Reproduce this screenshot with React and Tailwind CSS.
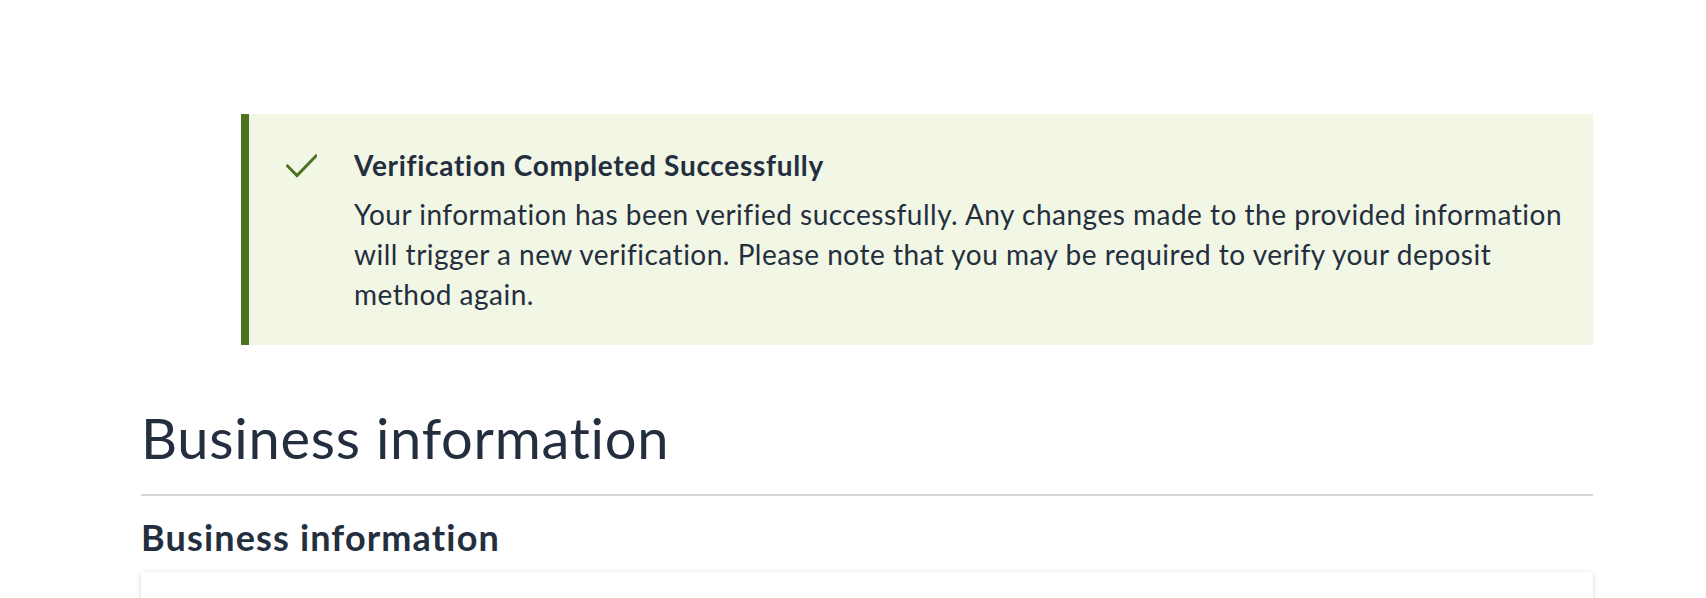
import React from 'react';

const CheckIcon = () => (
  <svg width="31" height="24" viewBox="0 0 31 24" fill="none" className="mt-[9px] shrink-0">
    <polyline
      points="1.5,12 11,21.5 30,2"
      stroke="#4b7321"
      strokeWidth="3"
      strokeLinecap="square"
      fill="none"
    />
  </svg>
);

const App = () => {
  return (
    <div className="min-h-screen bg-white font-['Lato',sans-serif] text-[#232f3e] overflow-hidden">
      <div className="ml-[141px] w-[1452px] pt-[114px]">
        {/* success flash */}
        <div className="ml-[100px] flex border-l-8 border-[#4b7321] bg-[#f2f6e4] pl-[37px] pr-[20px] pt-[31px] pb-[31px]">
          <CheckIcon />
          <div className="ml-[37px]">
            <div className="text-[28px] font-bold leading-[40px] tracking-[0.7px]">
              Verification Completed Successfully
            </div>
            <p className="mt-[9px] text-[28px] leading-[40px] tracking-[0.5px]">
              Your information has been verified successfully. Any changes made to the provided information
              <br />
              will trigger a new verification. Please note that you may be required to verify your deposit
              <br />
              method again.
            </p>
          </div>
        </div>

        <h1 className="mt-[57px] text-[56px] font-normal leading-[72px] tracking-[0.75px]">Business information</h1>
        <div className="mt-[20px] h-[2px] bg-[#d5d5dc]" />

        <h2 className="mt-[17px] text-[36px] font-bold leading-[48px] tracking-[1.15px]">Business information</h2>
        <div className="mt-[11px] h-[120px] rounded-[2px] bg-white shadow-[0_1px_5px_rgba(0,28,36,0.18)]" />
      </div>
    </div>
  );
};

export default App;
